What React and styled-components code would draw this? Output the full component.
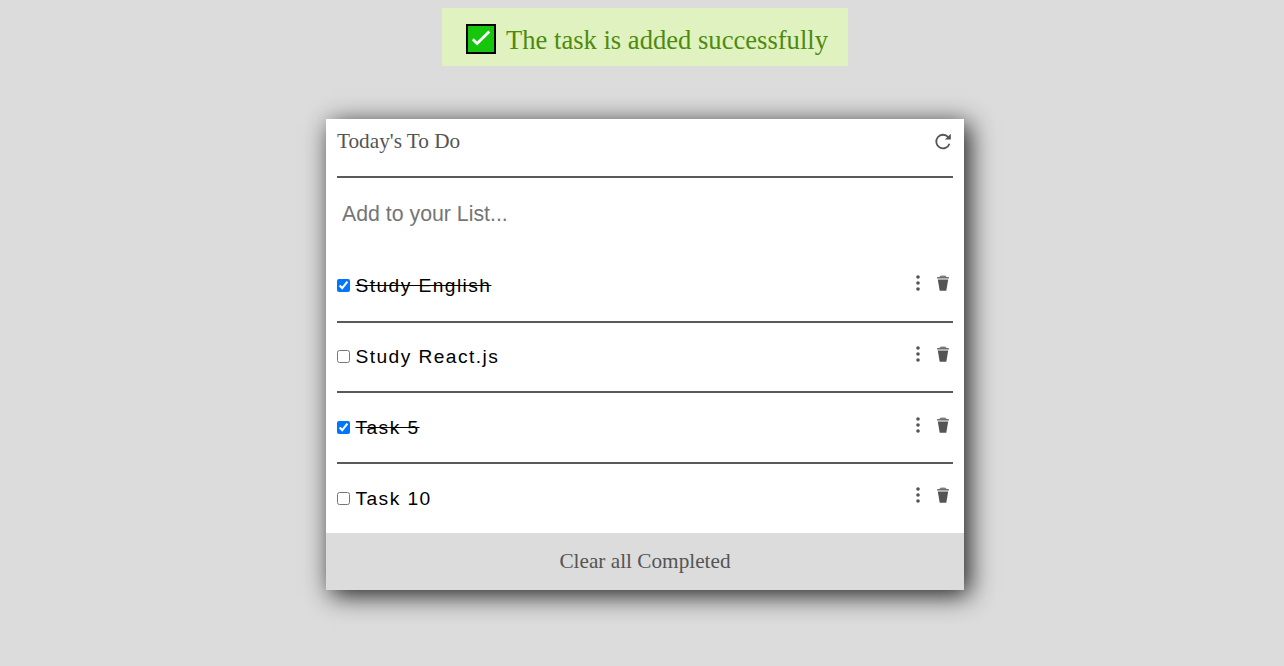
import React from 'react';
import styled, { createGlobalStyle } from 'styled-components';

const GlobalStyle = createGlobalStyle`
  * { box-sizing: border-box; }
  body {
    margin: 0;
    background: #dcdcdc;
    font-family: "Liberation Serif", "Times New Roman", serif;
  }
`;

const Page = styled.main`
  display: flex;
  flex-direction: column;
  align-items: center;
  min-height: 666px;
  padding: 8px 0 0 6px;
`;

const Alert = styled.div`
  display: flex;
  align-items: center;
  width: 406px;
  height: 58px;
  padding: 3px 0 0 24px;
  background: #dff2bf;
  color: #4f8a10;
  font-size: 26.6px;
  white-space: nowrap;
`;

const AlertText = styled.span`
  padding-top: 3px;
`;

const AlertIcon = styled.svg`
  flex: none;
  width: 30px;
  height: 30px;
  margin-right: 10px;
`;

const Card = styled.section`
  width: 638px;
  height: 471px;
  margin-top: 53px;
  background: #fff;
  box-shadow: 5px 5px 24px rgba(0, 0, 0, 0.88);
`;

const Header = styled.header`
  display: flex;
  justify-content: space-between;
  height: 59px;
  margin: 0 11px;
  padding-top: 10px;
  border-bottom: 2px solid #5a5a5a;
`;

const Title = styled.h1`
  margin: 0;
  color: #545454;
  font-size: 21.25px;
  font-weight: 400;
  line-height: 24px;
`;

const IconButton = styled.button`
  display: flex;
  width: 18px;
  height: 18px;
  padding: 0;
  border: 0;
  background: none;
  color: #545454;
  cursor: pointer;

  svg {
    width: 100%;
    height: 100%;
    fill: currentColor;
  }
`;

const RefreshButton = styled(IconButton)`
  margin: 4px 1px 0 0;
`;

const NewTask = styled.input`
  display: block;
  width: 616px;
  height: 73px;
  margin: 0 11px;
  padding: 0 5px;
  border: 0;
  outline: none;
  background: none;
  font-family: "Liberation Sans", Arial, sans-serif;
  font-size: 21.3px;

  &::placeholder { color: #757575; }
`;

const List = styled.ul`
  display: flex;
  flex-direction: column;
  height: 282px;
  margin: 0 11px;
  padding: 0;
  list-style: none;
`;

const Row = styled.li`
  display: flex;
  align-items: flex-start;
  height: ${(p) => p.$height}px;
  padding-top: ${(p) => p.$top}px;
  border-bottom: ${(p) => (p.$last ? '0' : '2px solid #5a5a5a')};
`;

const Check = styled.input`
  flex: none;
  width: 13px;
  height: 13px;
  margin: 6px 5.5px 0 0;
`;

const Label = styled.span`
  flex: 1;
  padding-top: 1px;
  color: #000;
  font-family: "Liberation Sans", Arial, sans-serif;
  font-size: 19.2px;
  line-height: 24px;
  letter-spacing: 1.43px;
`;

const Name = styled.span`
  text-decoration: ${(p) => (p.$done ? 'line-through' : 'none')};
`;

const Actions = styled.div`
  display: flex;
  gap: 7px;
  padding: ${(p) => (p.$last ? 0 : 1)}px 1px 0 0;
`;

const Footer = styled.button`
  display: block;
  width: 100%;
  height: 57px;
  padding: 0;
  border: 0;
  background: #dcdcdc;
  color: #545454;
  font-family: inherit;
  font-size: 21.25px;
  cursor: pointer;
`;

const tasks = [
  { name: 'Study English', done: true, height: 72, top: 22 },
  { name: 'Study React.js', done: false, height: 70, top: 21 },
  { name: 'Task 5', done: true, height: 71, top: 22 },
  { name: 'Task 10', done: false, height: 69, top: 22 },
];

const Refresh = () => (
  <svg viewBox="0 0 18 18">
    <path d="M14.2 4.1A6.8 6.8 0 1 0 15.5 10.8" fill="none" stroke="currentColor" strokeWidth="1.8" />
    <path d="M16.8 .8v5.7h-5.9z" />
  </svg>
);

const Dots = () => (
  <svg viewBox="0 0 18 18">
    <circle cx="9" cy="3" r="1.8" />
    <circle cx="9" cy="9" r="1.8" />
    <circle cx="9" cy="15" r="1.8" />
  </svg>
);

const Trash = () => (
  <svg viewBox="0 0 18 18">
    <path d="M5.6 3q0-1.4 3.4-1.4T12.4 3z" opacity=".75" />
    <path d="M3.3 2.9h11.4l.4 1.6H2.9z" opacity=".85" />
    <path d="M3.8 5.5h10.4l-1.9 11.2H5.7z" />
  </svg>
);

export default function App() {
  return (
    <>
      <GlobalStyle />
      <Page>
        <Alert role="status">
          <AlertIcon viewBox="0 0 30 30">
            <rect x="1" y="1" width="28" height="28" fill="#16c60c" stroke="#000" strokeWidth="2" />
            <path d="M6.8 15.2l4.3 4.3L23.3 7.5" fill="none" stroke="#fff" strokeWidth="2.7" />
          </AlertIcon>
          <AlertText>The task is added successfully</AlertText>
        </Alert>
        <Card>
          <Header>
            <Title>Today's To Do</Title>
            <RefreshButton aria-label="Refresh"><Refresh /></RefreshButton>
          </Header>
          <NewTask placeholder="Add to your List..." />
          <List>
            {tasks.map((task, i) => (
              <Row key={task.name} $height={task.height} $top={task.top} $last={i === tasks.length - 1}>
                <Check type="checkbox" defaultChecked={task.done} />
                <Label><Name $done={task.done}>{task.name}</Name></Label>
                <Actions $last={i === tasks.length - 1}>
                  <IconButton aria-label="Options"><Dots /></IconButton>
                  <IconButton aria-label="Delete"><Trash /></IconButton>
                </Actions>
              </Row>
            ))}
          </List>
          <Footer>Clear all Completed</Footer>
        </Card>
      </Page>
    </>
  );
}
